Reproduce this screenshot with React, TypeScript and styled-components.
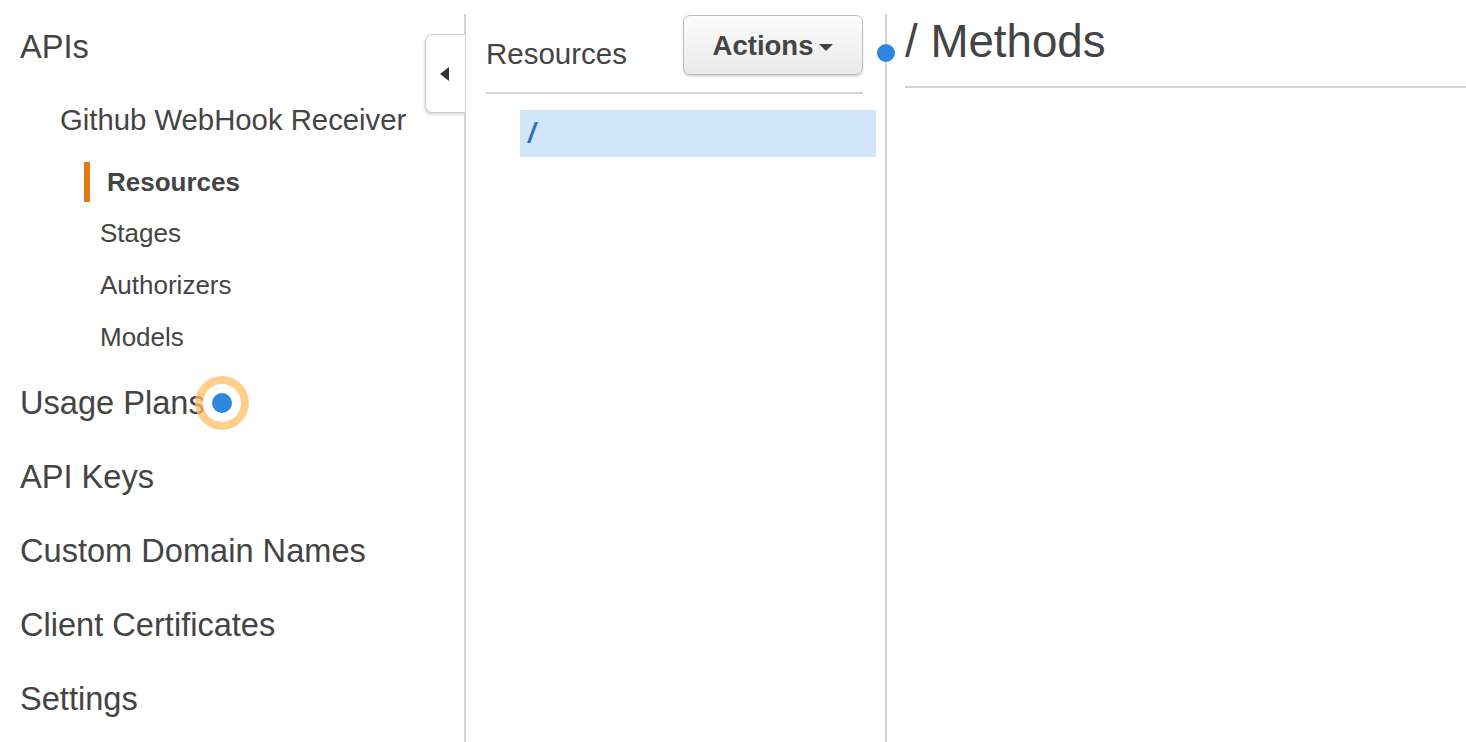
import React from 'react';
import styled, { createGlobalStyle } from 'styled-components';

const GlobalStyle = createGlobalStyle`
	html, body {
		margin: 0;
		padding: 0;
		background: #fff;
	}
	body {
		font-family: 'Liberation Sans', Arial, Helvetica, sans-serif;
		color: #444;
	}
`;

const Page = styled.div`
	display: flex;
	width: 1466px;
	height: 742px;
	overflow: hidden;
	background: #fff;
`;

const Sidebar = styled.nav`
	width: 464px;
	flex-shrink: 0;
	padding-top: 10px;
	box-sizing: border-box;
`;

const TopItem = styled.div<{ $gap?: number }>`
	position: relative;
	height: 74px;
	line-height: 74px;
	padding-left: 20px;
	margin-top: ${(p) => p.$gap || 0}px;
	font-size: 32.6px;
	color: #444;
	white-space: nowrap;
`;

const ApiName = styled.div`
	height: 72px;
	line-height: 72px;
	padding-left: 60px;
	margin-bottom: 1px;
	font-size: 29.3px;
	color: #444;
	white-space: nowrap;
`;

const SubList = styled.div`
	padding-left: 84px;
`;

const SubItem = styled.div<{ $active?: boolean }>`
	height: ${(p) => (p.$active ? 50 : 52)}px;
	display: flex;
	align-items: center;
	font-size: 26px;
	color: #444;
	font-weight: ${(p) => (p.$active ? 700 : 400)};
	padding-left: ${(p) => (p.$active ? 0 : 16)}px;
	box-sizing: border-box;

	&::before {
		content: '';
		display: ${(p) => (p.$active ? 'block' : 'none')};
		width: 6px;
		height: 40px;
		margin-right: 17px;
		background: #e47911;
	}
`;

const Hotspot = styled.span`
	position: absolute;
	left: 195px;
	top: 10px;
	width: 54px;
	height: 54px;
	border-radius: 50%;
	background: rgba(255, 190, 100, 0.75);
	display: flex;
	align-items: center;
	justify-content: center;

	&::before {
		content: '';
		width: 38px;
		height: 38px;
		border-radius: 50%;
		background: #fff;
	}
	&::after {
		content: '';
		position: absolute;
		width: 20px;
		height: 20px;
		border-radius: 50%;
		background: #2f86dd;
	}
`;

const Divider = styled.div`
	position: relative;
	width: 2px;
	flex-shrink: 0;
	margin-top: 14px;
	background: #d4d4d4;
`;

const CollapseTab = styled.button`
	position: absolute;
	right: 1px;
	top: 20px;
	width: 40px;
	height: 79px;
	padding: 0;
	border: 1.5px solid #ccc;
	border-right: none;
	border-radius: 7px 0 0 7px;
	background: #fff;
	box-shadow: -1px 2px 2px rgba(0, 0, 0, 0.12);
	display: flex;
	align-items: center;
	justify-content: center;

	&::before {
		content: '';
		margin-left: -3px;
		border-top: 7px solid transparent;
		border-bottom: 7px solid transparent;
		border-right: 9px solid #333;
	}
`;

const MiddlePanel = styled.section`
	width: 419px;
	flex-shrink: 0;
	padding: 1px 9px 0 20px;
	margin-top: 14px;
	box-sizing: border-box;
`;

const PanelHeader = styled.div`
	display: flex;
	justify-content: space-between;
	align-items: flex-start;
	margin-right: 13px;
	padding-bottom: 17px;
	border-bottom: 2px solid #d4d4d4;
`;

const PanelTitle = styled.h2`
	margin: 22px 0 0;
	font-size: 29.5px;
	font-weight: 400;
	line-height: 34px;
	color: #444;
`;

const ActionsButton = styled.button`
	width: 180px;
	height: 60px;
	display: flex;
	align-items: center;
	justify-content: center;
	gap: 6px;
	border: 1.5px solid #bdbdbd;
	border-radius: 7px;
	background: linear-gradient(#fdfdfd, #e9e9e9);
	box-shadow: 0 2px 2px rgba(0, 0, 0, 0.15);
	font-family: 'Liberation Sans', Arial, sans-serif;
	font-size: 27.5px;
	font-weight: 700;
	color: #444;
	padding: 2px 0 0;

	&::after {
		content: '';
		margin-top: 2px;
		border-left: 7px solid transparent;
		border-right: 7px solid transparent;
		border-top: 7px solid #444;
	}
`;

const TreeRow = styled.div<{ $selected?: boolean }>`
	margin: 16px 0 0 34px;
	height: 47px;
	display: flex;
	align-items: center;
	padding-left: 8px;
	background: ${(p) => (p.$selected ? '#d2e6fa' : 'transparent')};
	font-size: 27px;
	font-weight: 700;
	font-style: italic;
	color: #2f70b7;
`;

const RightPanel = styled.section`
	position: relative;
	flex: 1;
	padding-left: 18px;
	margin-top: 14px;
`;

const StatusDot = styled.span`
	position: absolute;
	left: -10px;
	top: 30px;
	width: 18px;
	height: 18px;
	border-radius: 50%;
	background: #2f86dd;
`;

const MethodsTitle = styled.h1`
	margin: 0;
	padding: 4px 0 20px;
	font-size: 45.7px;
	font-weight: 400;
	line-height: 48px;
	color: #444;
	border-bottom: 2px solid #d4d4d4;
`;

const subItems = ['Stages', 'Authorizers', 'Models'];
const topItems = ['API Keys', 'Custom Domain Names', 'Client Certificates', 'Settings'];

export default function App() {
	return (
		<>
			<GlobalStyle />
			<Page>
				<Sidebar>
					<TopItem>APIs</TopItem>
					<ApiName>Github WebHook Receiver</ApiName>
					<SubList>
						<SubItem $active>Resources</SubItem>
						{subItems.map((s) => (
							<SubItem key={s}>{s}</SubItem>
						))}
					</SubList>
					<TopItem $gap={3}>
						Usage Plans
						<Hotspot />
					</TopItem>
					{topItems.map((t) => (
						<TopItem key={t}>{t}</TopItem>
					))}
				</Sidebar>
				<Divider>
					<CollapseTab aria-label="Collapse" />
				</Divider>
				<MiddlePanel>
					<PanelHeader>
						<PanelTitle>Resources</PanelTitle>
						<ActionsButton>Actions</ActionsButton>
					</PanelHeader>
					<TreeRow $selected>/</TreeRow>
				</MiddlePanel>
				<Divider />
				<RightPanel>
					<StatusDot />
					<MethodsTitle>/ Methods</MethodsTitle>
				</RightPanel>
			</Page>
		</>
	);
}
